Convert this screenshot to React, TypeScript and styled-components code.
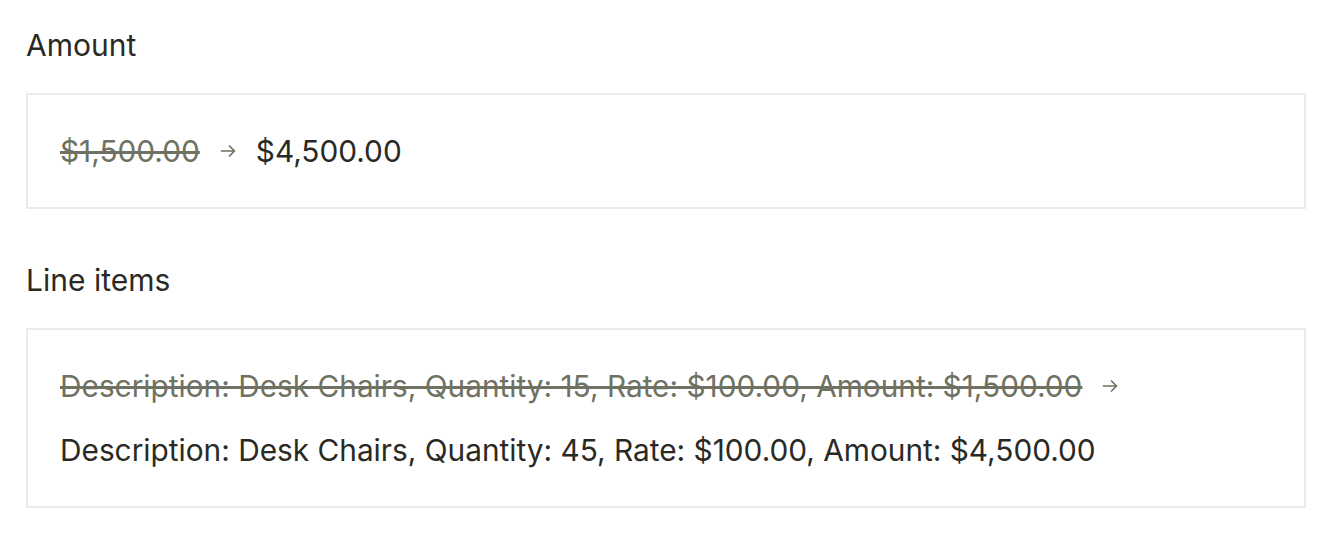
import styled, { createGlobalStyle } from "styled-components";

const GlobalStyle = createGlobalStyle`
  body {
    margin: 0;
    background: #ffffff;
    font-family: Inter, "Noto Sans", sans-serif;
    color: #2a2a25;
  }
`;

const Page = styled.div`
  padding: 25px 32px 0 26px;
  display: flex;
  flex-direction: column;
  gap: 51px;
`;

const Field = styled.section`
  display: flex;
  flex-direction: column;
`;

const Label = styled.h3`
  margin: 0 0 28px;
  font-size: 30px;
  font-weight: 400;
  line-height: 40px;
  color: #2a2a25;
`;

const Box = styled.div`
  border: 2px solid #eceae6;
  padding: 36px 34px 36px 32px;
  display: flex;
  flex-direction: column;
  gap: 24px;
`;

const Row = styled.div`
  display: flex;
  align-items: center;
  flex-wrap: wrap;
  gap: 20px;
  font-size: 29.8px;
  line-height: 40px;
`;

const Old = styled.span`
  color: #6f7262;
  text-decoration: line-through;
  text-decoration-thickness: 3px;
`;

const New = styled.span`
  color: #2a2a25;
`;

const Arrow = () => (
  <svg width="16" height="16" viewBox="0 0 16 16" fill="none" stroke="#6f7262" strokeWidth="1.7" strokeLinecap="round" strokeLinejoin="round">
    <path d="M1.5 8h13M9.5 3 14.5 8 9.5 13" />
  </svg>
);

const CHANGES = [
  {
    label: "Amount",
    from: "$1,500.00",
    to: "$4,500.00",
    inline: true,
  },
  {
    label: "Line items",
    from: "Description: Desk Chairs, Quantity: 15, Rate: $100.00, Amount: $1,500.00",
    to: "Description: Desk Chairs, Quantity: 45, Rate: $100.00, Amount: $4,500.00",
    inline: false,
  },
];

export default function App() {
  return (
    <>
      <GlobalStyle />
      <Page>
        {CHANGES.map((c) => (
          <Field key={c.label}>
            <Label>{c.label}</Label>
            <Box>
              {c.inline ? (
                <Row>
                  <Old>{c.from}</Old>
                  <Arrow />
                  <New>{c.to}</New>
                </Row>
              ) : (
                <>
                  <Row>
                    <Old>{c.from}</Old>
                    <Arrow />
                  </Row>
                  <Row>
                    <New>{c.to}</New>
                  </Row>
                </>
              )}
            </Box>
          </Field>
        ))}
      </Page>
    </>
  );
}
